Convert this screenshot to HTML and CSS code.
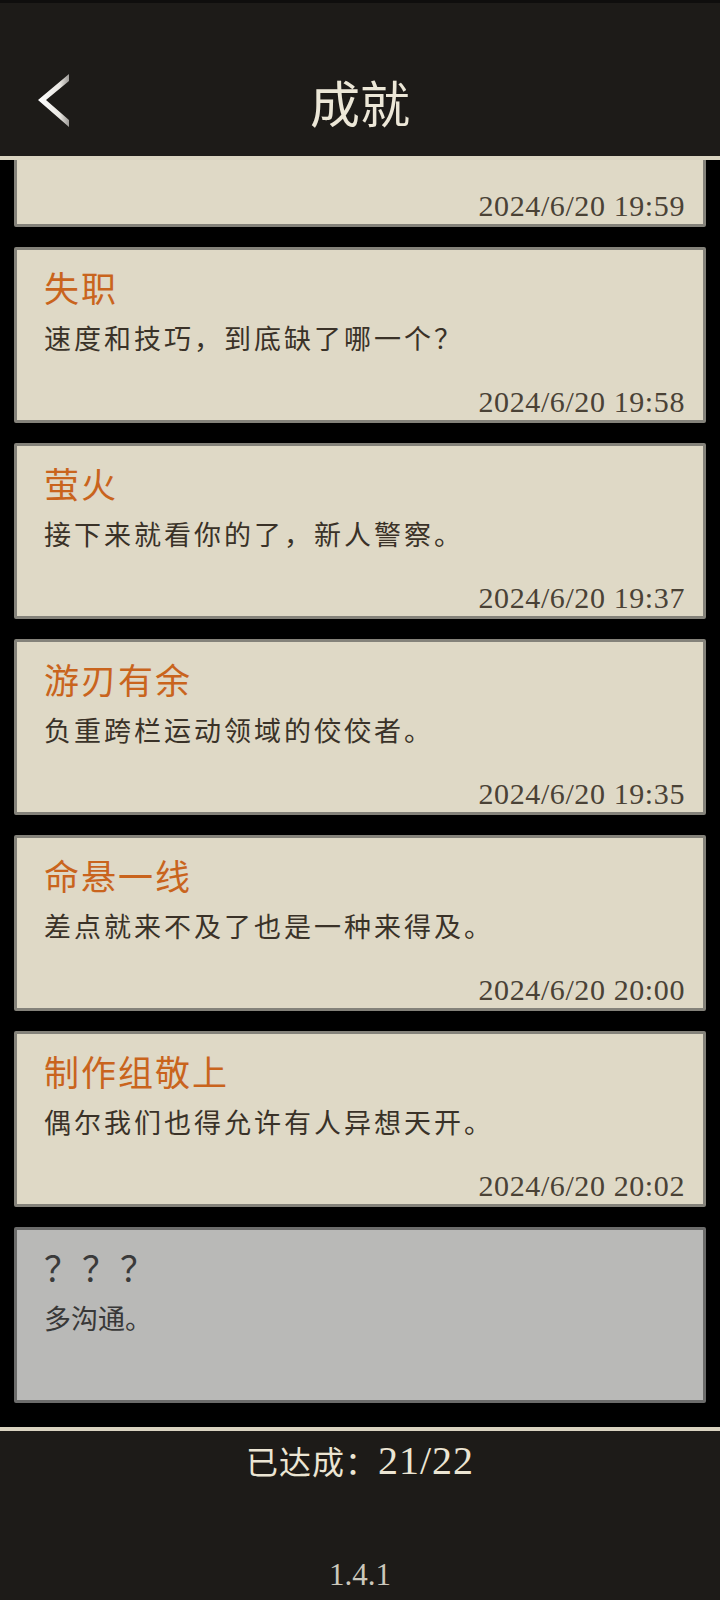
FILE: index.html
```html
<!DOCTYPE html>
<html lang="zh-CN">
<head>
<meta charset="utf-8">
<title>成就</title>
<link rel="stylesheet" href="styles.css">
</head>
<body>
<div class="app">
  <header class="header">
    <div class="back">
      <svg width="40" height="60" viewBox="0 0 40 60" aria-hidden="true">
        <defs>
          <linearGradient id="chev" x1="0" y1="0" x2="1" y2="0">
            <stop offset="0" stop-color="#ffffff"/>
            <stop offset="0.7" stop-color="#e9e7e2"/>
            <stop offset="1" stop-color="#9c9a96"/>
          </linearGradient>
        </defs>
        <polygon points="32,3 1,29 32,56 32,49 9,29 32,10" fill="url(#chev)"/>
      </svg>
    </div>
    <h1 class="title">成就</h1>
    <div class="spacer"></div>
  </header>

  <main class="list">
    <section class="card card-first">
      <div class="date">2024/6/20 19:59</div>
    </section>
    <section class="card">
      <h2 class="name">失职</h2>
      <p class="desc">速度和技巧，到底缺了哪一个？</p>
      <div class="date">2024/6/20 19:58</div>
    </section>
    <section class="card">
      <h2 class="name">萤火</h2>
      <p class="desc">接下来就看你的了，新人警察。</p>
      <div class="date">2024/6/20 19:37</div>
    </section>
    <section class="card">
      <h2 class="name">游刃有余</h2>
      <p class="desc">负重跨栏运动领域的佼佼者。</p>
      <div class="date">2024/6/20 19:35</div>
    </section>
    <section class="card">
      <h2 class="name">命悬一线</h2>
      <p class="desc">差点就来不及了也是一种来得及。</p>
      <div class="date">2024/6/20 20:00</div>
    </section>
    <section class="card">
      <h2 class="name">制作组敬上</h2>
      <p class="desc">偶尔我们也得允许有人异想天开。</p>
      <div class="date">2024/6/20 20:02</div>
    </section>
    <section class="card card-locked">
      <h2 class="name">？？？</h2>
      <p class="desc">多沟通。</p>
    </section>
  </main>

  <footer class="footer">
    <div class="achieved">已达成：<span class="count">21/22</span></div>
    <div class="version">1.4.1</div>
  </footer>
</div>
</body>
</html>
```

FILE: styles.css
```css
* { box-sizing: border-box; }

html, body {
  margin: 0;
  padding: 0;
  background: #000;
}

.app {
  width: 720px;
  height: 1600px;
  display: flex;
  flex-direction: column;
  background: #000;
  overflow: hidden;
}

.header {
  flex: 0 0 auto;
  height: 160px;
  background: #1d1b18;
  border-top: 3px solid #0f0e0d;
  border-bottom: 4px solid #d9d3c0;
  display: grid;
  grid-template-columns: 1fr auto 1fr;
  align-items: center;
  padding-top: 42px;
}

.back {
  padding-left: 37px;
  display: flex;
  align-items: center;
  height: 60px;
}

.title {
  margin: 0;
  font-family: "Noto Sans CJK SC", sans-serif;
  font-weight: 400;
  font-size: 50px;
  line-height: 60px;
  color: #ece7d7;
  letter-spacing: 0;
}

.list {
  flex: 1 1 auto;
  min-height: 0;
  overflow: hidden;
  padding: 0 14px;
  display: flex;
  flex-direction: column;
  gap: 20px;
}

.card {
  flex: 0 0 176px;
  height: 176px;
  background: #dfd9c6;
  border: 3px solid #84827a;
  border-radius: 2px;
  padding: 16px 18px 3px 27px;
  display: flex;
  flex-direction: column;
}

.card-first {
  margin-top: -109px;
}

.name {
  margin: 0;
  font-family: "Noto Sans CJK SC", sans-serif;
  font-weight: 400;
  font-size: 35px;
  line-height: 42px;
  letter-spacing: 2px;
  color: #c9641d;
}

.desc {
  margin: 13px 0 0;
  font-family: "Noto Sans CJK SC", sans-serif;
  font-size: 27px;
  line-height: 34px;
  letter-spacing: 3px;
  color: #3a3228;
}

.date {
  margin-top: auto;
  align-self: flex-end;
  font-family: "Liberation Serif", serif;
  font-size: 30px;
  line-height: 30px;
  letter-spacing: 0.6px;
  color: #4a4236;
}

.card-locked {
  background: #b9b9b7;
  border-color: #6c6c6b;
}

.card-locked .name {
  color: #3a3a3a;
  letter-spacing: 3px;
}

.card-locked .desc {
  color: #383838;
  letter-spacing: 0;
}

.footer {
  flex: 0 0 173px;
  height: 173px;
  background: #1d1b18;
  border-top: 4px solid #d9d3c0;
  display: flex;
  flex-direction: column;
  align-items: center;
  padding: 7px 0 10px;
}

.achieved {
  font-family: "Noto Sans CJK SC", sans-serif;
  font-size: 32px;
  line-height: 44px;
  letter-spacing: 1px;
  color: #ebe5d3;
}

.count {
  font-family: "Liberation Serif", serif;
  font-size: 40px;
  letter-spacing: 1px;
}

.version {
  margin-top: auto;
  font-family: "Liberation Serif", serif;
  font-size: 31px;
  line-height: 30px;
  color: #cbc7bb;
}
```
